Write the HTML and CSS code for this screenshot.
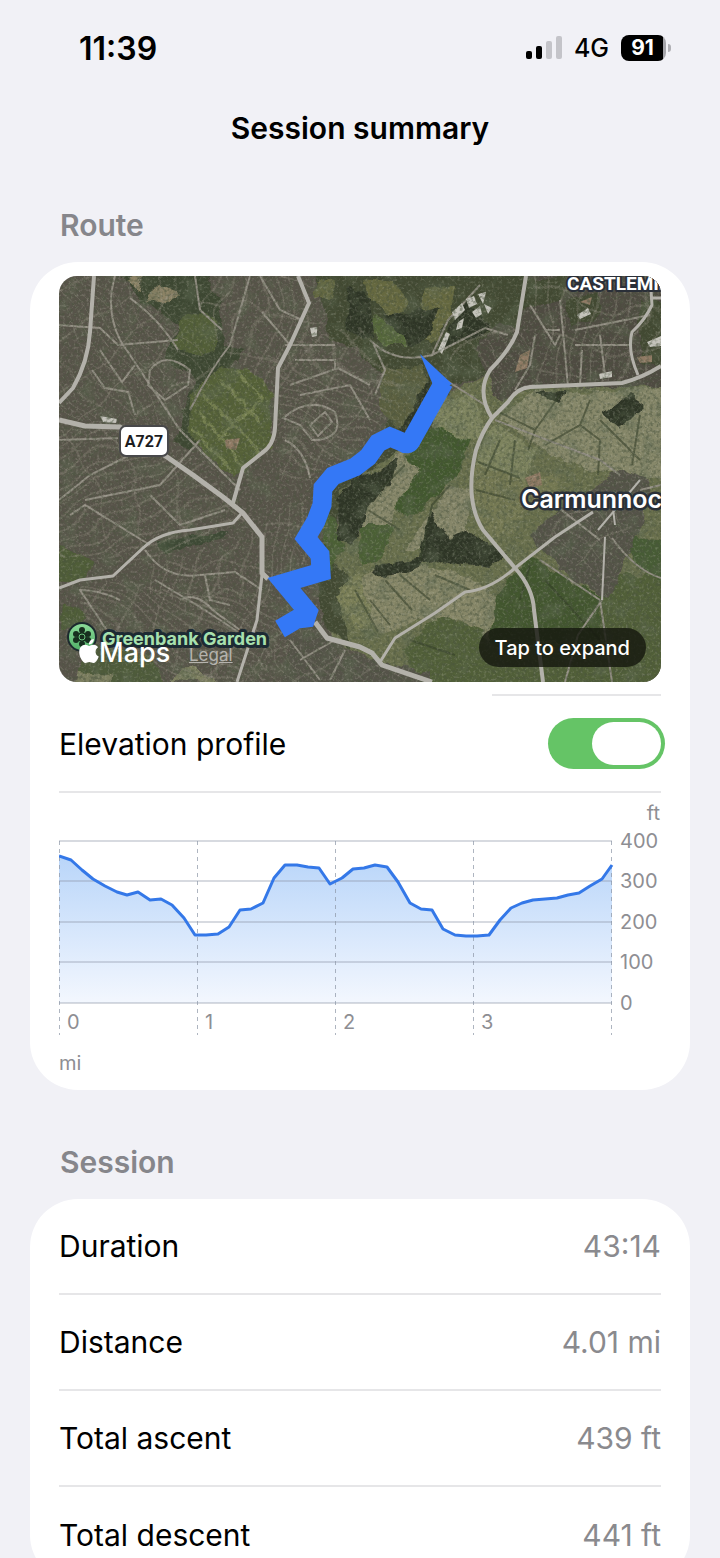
FILE: index.html
```html
<!doctype html>
<html lang="en">
<head>
<meta charset="utf-8">
<meta name="viewport" content="width=device-width, initial-scale=1">
<title>Session summary</title>
<link rel="stylesheet" href="styles.css">
</head>

<body>
<div class="screen">
	<div class="status">
		<span class="time">11:39</span>
		<div class="status-right">
			<svg class="signal" width="36" height="24" viewBox="0 0 36 24" aria-hidden="true">
				<rect x="0" y="15" width="6" height="8" rx="2"/>
				<rect x="10" y="10" width="6" height="13" rx="2"/>
				<rect class="off" x="20" y="5" width="6" height="18" rx="2"/>
				<rect class="off" x="30" y="0" width="6" height="23" rx="2"/>
			</svg>
			<span class="network">4G</span>
			<span class="battery"><span class="battery-body">91</span></span>
		</div>
	</div>

	<h1>Session summary</h1>

	<main>
		<h2>Route</h2>
		<section class="card route-card">
			<div class="map">
				<svg class="map-art" viewBox="59 276 602 406" role="img" aria-label="Satellite map of the route">
					<defs>
						<pattern id="st1" width="13" height="38" patternUnits="userSpaceOnUse" patternTransform="rotate(-38)">
							<path d="M0 0V38M0 2H13"/>
						</pattern>
						<pattern id="st2" width="36" height="11" patternUnits="userSpaceOnUse" patternTransform="rotate(28)">
							<path d="M0 1H36M2 0V11"/>
						</pattern>
						<pattern id="st3" width="15" height="42" patternUnits="userSpaceOnUse" patternTransform="rotate(12)">
							<path d="M1 0V42M0 1H15"/>
						</pattern>
						<pattern id="st4" width="40" height="12" patternUnits="userSpaceOnUse" patternTransform="rotate(-24)">
							<path d="M0 1H40M1 0V12"/>
						</pattern>
						<filter id="bend" x="-5%" y="-5%" width="110%" height="110%">
							<feTurbulence type="fractalNoise" baseFrequency=".014" numOctaves="2" seed="4" result="n"/>
							<feDisplacementMap in="SourceGraphic" in2="n" scale="46" xChannelSelector="R" yChannelSelector="G"/>
						</filter>
						<filter id="rough" x="-5%" y="-5%" width="110%" height="110%">
							<feTurbulence type="fractalNoise" baseFrequency=".06" numOctaves="3" seed="9" result="n"/>
							<feDisplacementMap in="SourceGraphic" in2="n" scale="12" xChannelSelector="R" yChannelSelector="G"/>
						</filter>
						<filter id="patches" x="0" y="0" width="100%" height="100%">
							<feTurbulence type="fractalNoise" baseFrequency=".05" numOctaves="4" seed="6"/>
							<feColorMatrix values="0 0 0 0 .12  0 0 0 0 .15  0 0 0 0 .09  4 0 0 0 -2"/>
						</filter>
						<filter id="dark" x="0" y="0" width="100%" height="100%">
							<feTurbulence type="fractalNoise" baseFrequency=".3" numOctaves="3" seed="2"/>
							<feColorMatrix values="0 0 0 0 .07  0 0 0 0 .09  0 0 0 0 .05  3.4 0 0 0 -1.5"/>
						</filter>
						<filter id="light" x="0" y="0" width="100%" height="100%">
							<feTurbulence type="fractalNoise" baseFrequency=".38" numOctaves="2" seed="17"/>
							<feColorMatrix values="0 0 0 0 .72  0 0 0 0 .7  0 0 0 0 .6  0 3 0 0 -1.55"/>
						</filter>
						<linearGradient id="pin" x1="0" y1="0" x2="0" y2="1">
							<stop offset="0" stop-color="#8ddc9a"/>
							<stop offset="1" stop-color="#4fae66"/>
						</linearGradient>
					</defs>

					<rect x="59" y="276" width="602" height="406" fill="#58544a"/>

					<!-- woods, parks and fields -->
					<g filter="url(#rough)">
						<path fill="#6a6f4e" d="M430 400L490 372 530 380H670V690H430L330 640 340 480 400 440Z"/>
						<path fill="#424a33" d="M312 262H530L520 330 490 372 452 385 430 430 400 450 340 490 330 560 350 575 340 600 350 650 320 620 320 560 330 490 380 440 400 400 358 348 330 340Z"/>
						<path fill="#3d4631" d="M115 268H205L220 300 225 345 245 350 215 385 190 450 175 440 195 380 165 355 178 325 140 300Z"/>
						<path fill="#525f39" d="M180 318Q200 305 218 325L215 350 200 358 172 345Z"/>
						<path fill="#8b8265" d="M126 282L142 276 140 290ZM146 300L160 286 180 294 172 304Z"/>
						<path fill="#566239" d="M220 366L250 370 272 390 270 445 235 480 205 455 189 430 190 400 205 380Z"/>
						<path fill="#66693f" d="M362 278L395 282 410 302 392 318 370 300ZM425 290L455 286 450 320 430 345 418 335ZM320 276L336 282 332 298 314 298Z"/>
						<path fill="#56683a" d="M365 322Q380 312 400 330L405 345 385 345Z"/>
						<path fill="#5c6140" d="M380 370L425 365 428 400 400 428 380 410Z"/>
						<path fill="#504c43" d="M485 372L475 350 500 320 518 330 525 270H665V388L530 386 500 402Z"/>
						<path fill="#424832" d="M515 280L570 276 560 300 520 310ZM566 300L600 292 600 315 570 325ZM640 300L665 300V370L640 360Z"/>
						<path fill="#87886a" d="M500 418L535 390 600 392 665 388V482L590 470 540 450Z"/>
						<path fill="#7e845f" d="M440 400L475 396 485 430 465 445 432 425ZM496 424L535 450 525 488 478 480 480 445Z"/>
						<path fill="#43582f" d="M415 450L430 425 470 440 456 475 410 520 385 500 395 470Z"/>
						<path fill="#87876a" d="M400 450L420 470 398 500 385 530 362 530 360 510ZM445 488L470 490 468 540 430 550 405 550Z"/>
						<path fill="#4b6034" d="M358 525L395 525 380 560 362 565ZM318 520L330 510 345 550 330 570Z"/>
						<path fill="#757953" d="M476 465L530 480 520 530 490 540 470 500ZM530 478L560 475 560 505 530 500Z"/>
						<path fill="#878767" d="M352 580L420 566 470 576 500 600 488 645 460 620 420 620 380 635Z"/>
						<path fill="#42562f" d="M496 596L530 558 600 595 604 640 530 645 488 652Z"/>
						<path fill="#515f38" d="M600 575L665 575V690H430L400 650 440 615 480 630 500 650 600 640Z"/>
						<path fill="#475b35" d="M620 535L665 540V585L640 570Z"/>
						<path fill="#7b8058" d="M338 588L358 575 375 625 358 628 335 598Z"/>
						<path fill="#505d39" d="M59 545L92 560 85 580 59 582ZM62 605L85 612 80 630 60 628Z"/>
						<path fill="#505c3a" d="M80 640L150 655 165 690H80Z"/>
						<path fill="#7d7f60" d="M168 680L190 665 218 682ZM80 672L110 675 110 690H75Z"/>
						<path fill="#3d4a34" d="M160 540L230 532 225 540 165 552Z"/>
						<path fill="#2e3427" d="M335 500Q350 478 375 472L398 460 392 482 368 512 352 545 340 540ZM430 510L450 540 470 530 505 555 490 568 440 560 400 575 372 578 378 565 420 558ZM602 415L630 395 645 405 620 430ZM535 392L565 390 560 405Z"/>
						<path fill="#2e3528" d="M383 315L415 310 440 305 430 335 408 345ZM465 300L490 325 480 340 450 345 440 352ZM350 285L372 300 375 340 345 330ZM400 430L430 375 425 420 405 440Z"/>
						<path fill="#55534a" d="M530 535L560 510 620 470 650 480 640 530 610 600 560 570ZM340 655L430 672 430 690H280L290 640 315 630Z"/>
					</g>

					<!-- golf fairways -->
					<g class="fairway" filter="url(#rough)">
						<path d="M205 395L262 455M198 410L245 468M222 378L262 425M215 440L262 400M195 430L230 470M235 370L262 400"/>
					</g>

					<!-- field hedges -->
					<path class="hedge" d="M495 410L535 430 560 395M535 430L528 450M545 445L580 425 600 440M580 425L590 400M600 440L598 475M600 420L640 460M632 465L640 415M500 440L485 475M515 440L510 485M478 462L520 478M476 490L515 500M380 490L405 465M368 510L400 530M370 600L390 625M385 580L412 610M400 575L430 600M355 590L378 632M435 575L470 590M530 565L520 600M545 580L600 640M410 640L455 655M420 560L432 505 450 485"/>

					<rect x="59" y="276" width="602" height="406" filter="url(#patches)" opacity=".45"/>

					<!-- side streets -->
					<g filter="url(#bend)" opacity=".75">
						<path fill="url(#st1)" d="M40 260H185L180 330 215 375 180 430 40 420Z"/>
						<path fill="url(#st3)" d="M205 260H320L315 330 280 380 235 360 215 330Z"/>
						<path fill="url(#st2)" d="M285 345L350 335 395 370 385 430 330 480 280 470Z"/>
						<path fill="url(#st4)" d="M40 425L125 430 195 465 245 515 140 560 40 555Z"/>
						<path fill="url(#st3)" d="M150 560L260 525 320 500 330 560 275 590 255 600 150 600Z"/>
						<path fill="url(#st2)" d="M70 590L255 590 280 640 270 700 80 640Z"/>
						<path fill="url(#st1)" d="M280 640L330 650 420 690H255Z"/>
						<path fill="url(#st3)" d="M535 260H675V375L530 390Z"/>
						<path fill="url(#st1)" d="M480 320L525 330 500 400 455 375Z"/>
						<path fill="url(#st1)" d="M545 540L590 500 630 490 630 540 610 590Z"/>
					</g>
					<path class="street" d="M115 276Q105 310 120 340L180 430 240 490M130 298Q160 320 178 350M59 325L100 328 118 345 178 340M100 350L122 382 135 365M92 370L105 388 128 392 135 415M59 440L118 438M150 370Q165 350 190 370L188 385 165 400 148 385ZM195 276L200 310 222 330M250 276L230 345Q210 370 190 410M260 276L280 310 302 320M262 312L290 345M285 345H335M295 360H335V370M290 385L338 368 370 385M300 395L350 385 370 420M283 418Q310 395 335 412 345 440 312 440L300 425ZM310 425L325 412 332 422 318 436ZM285 440Q305 450 310 478M59 500L90 475 140 450M70 515L85 505 150 545M85 500L160 485 200 440M150 495L180 525 225 510M120 600Q100 590 80 590L120 650M145 550Q165 580 200 575L235 572 262 590M180 600Q195 590 215 612L240 630M205 575L210 600 230 605M155 580L205 610 250 640M290 640L320 680M300 660L335 640M330 680L345 650"/>
					<path class="street" d="M370 340Q395 365 432 355L485 328 508 335M432 355L448 320 480 285M374 345L385 370 375 395M430 370L485 405M535 335L530 365 515 390M560 300L568 386M530 305L555 345 560 335M575 330L650 315M575 345H632M600 335L605 375M580 385L582 350M545 330H560M495 420L600 460 620 475M555 505L600 540M540 560L600 600M612 538Q635 570 661 578M602 600L578 635 565 682M600 600L612 682M640 490L661 485"/>

					<!-- warehouses and bare roofs -->
					<path fill="#c4c3bb" d="M452 312L462 303 465 310 455 320ZM466 299L474 296 477 304 469 308ZM472 312L480 306 482 314 476 318ZM458 322L464 318 462 328 456 330ZM484 304L492 308 488 314ZM438 350L446 332 450 334 442 354ZM478 294L486 292 483 304ZM577 315L588 308 591 314 580 319ZM599 374L612 371 612 377 600 379ZM647 342L661 336V346L650 347ZM310 328L317 327 317 336 312 337ZM100 416L117 419 116 423 103 422Z"/>
					<path fill="#8f7a64" d="M525 478L540 472 542 485 530 488ZM637 357L652 355 652 362 640 363ZM225 440L240 438 236 450 226 448ZM580 302L592 297 590 305ZM520 355L530 350 527 368 515 372Z"/>

					<rect x="59" y="276" width="602" height="406" filter="url(#dark)" opacity=".5"/>
					<rect x="59" y="276" width="602" height="406" filter="url(#light)" opacity=".22"/>

					<!-- main roads -->
					<g class="road">
						<path d="M94 276L90 332Q88 362 73 388L59 403"/>
						<path class="wide" d="M59 420L85 426 120 427 167 457 193 475 223 497 243 513 262 537V573L268 579"/>
						<path d="M298 276L309 303 290 345 278 368 275 428Q274 445 262 453L243 468 233 503"/>
						<path class="thin" d="M59 588L80 580 113 576 143 548Q160 532 190 530L233 523 241 514"/>
						<path class="thin" d="M262 575L257 620 237 682"/>
						<path d="M526 276L517 332Q510 350 490 370 476 392 492 418 482 432 476 450 464 500 483 530L515 568Q533 588 534 610L543 682"/>
						<path d="M492 418L508 402Q517 388 530 387L622 383Q642 378 661 366"/>
						<path class="thin" d="M593 512L555 537 515 568Q490 590 465 592L435 613 395 638 380 662"/>
						<path class="wide" d="M315 622L327 638 360 647 372 653 382 665 432 682"/>
						<path class="thin" d="M650 276L652 305Q645 320 632 332 627 350 638 375M650 298H661"/>
						<path class="faint" d="M605 537L602 600M598 530L640 480M615 525L612 500"/>
					</g>

					<!-- recorded track -->
					<path fill="#3478f6" d="M420 354L452 384 436 392Z"/>
					<path class="track" d="M444 382L411 441Q408 446 402 442L390 437 378 443 368 457 355 467 333 476 323 488 322 505 316 521 306 538 320 555 321 572 284 583 308 612 306 618 297 619 280 629"/>

					<!-- labels -->
					<rect x="120" y="426" width="48" height="30" rx="6" fill="#fff" stroke="#48484a" stroke-width="2"/>
					<text class="shield" x="144" y="447" text-anchor="middle">A727</text>
					<text class="district" x="567" y="290">CASTLEMILK</text>
					<text class="place" x="521" y="508">Carmunnock</text>
					<text class="poi" x="102" y="645">Greenbank Garden</text>
					<circle cx="82" cy="637" r="14" fill="url(#pin)" stroke="#1c2a2e" stroke-width="2"/>
					<g fill="#17301f">
						<circle cx="82" cy="630" r="3"/><circle cx="88" cy="634" r="3"/><circle cx="88" cy="640" r="3"/>
						<circle cx="82" cy="644" r="3"/><circle cx="76" cy="640" r="3"/><circle cx="76" cy="634" r="3"/>
						<circle cx="82" cy="637" r="5"/>
					</g>
					<circle cx="82" cy="637" r="3" fill="none" stroke="#6cc67e"/>
					<path fill="#fff" transform="translate(77 639)" d="M12.152 6.896c-.948 0-2.415-1.078-3.96-1.04-2.04.027-3.91 1.183-4.961 3.014-2.117 3.675-.546 9.103 1.519 12.09 1.013 1.454 2.208 3.09 3.792 3.039 1.52-.065 2.09-.987 3.935-.987 1.831 0 2.35.987 3.96.948 1.637-.026 2.676-1.48 3.676-2.948 1.156-1.688 1.636-3.325 1.662-3.415-.039-.013-3.182-1.221-3.22-4.857-.026-3.04 2.48-4.494 2.597-4.559-1.429-2.09-3.623-2.324-4.39-2.376-2-.156-3.675 1.09-4.61 1.09zM15.53 3.83c.843-1.012 1.4-2.427 1.245-3.83-1.207.052-2.662.805-3.532 1.818-.78.896-1.454 2.338-1.273 3.714 1.338.104 2.715-.688 3.559-1.701"/>
					<text class="brand" x="99" y="662">Maps</text>
				</svg>
				<a class="legal" href="#">Legal</a>
				<button class="expand" type="button">Tap to expand</button>
			</div>

			<div class="short-line"></div>
			<div class="toggle-row">
				<label for="elevation">Elevation profile</label>
				<input class="switch" id="elevation" type="checkbox" role="switch" checked>
			</div>

			<svg class="chart" viewBox="0 0 602 297" role="img" aria-label="Elevation in feet by distance in miles">
				<defs>
					<linearGradient id="fill" x1="0" y1="48" x2="0" y2="210" gradientUnits="userSpaceOnUse">
						<stop offset="0" stop-color="#b3d2f9"/>
						<stop offset="1" stop-color="#f3f7fe"/>
					</linearGradient>
				</defs>
				<path fill="url(#fill)" d="M0 63L12 67 23 77 34 86 46 93 58 99 68 102 79 99 91 107 102 106 113 112 125 125 136 142 147 142 159 141 170 134 181 117 192 116 204 110 215 85 226 72 238 72 249 74 260 75 271 91 283 85 294 76 305 75 316 72 328 74 339 89 351 110 362 116 373 117 384 136 396 142 407 143 418 143 430 142 441 127 452 115 463 110 474 107 486 106 498 105 509 102 520 100 531 93 543 86 553 72V210H0Z"/>
				<path class="grid" d="M0 48H553M0 88H553M0 129H553M0 169H553M0 210H553"/>
				<path class="grid dashed" d="M.5 48V242M138.5 48V242M276.5 48V242M414.5 48V242M552.5 48V242"/>
				<path class="profile" d="M0 63L12 67 23 77 34 86 46 93 58 99 68 102 79 99 91 107 102 106 113 112 125 125 136 142 147 142 159 141 170 134 181 117 192 116 204 110 215 85 226 72 238 72 249 74 260 75 271 91 283 85 294 76 305 75 316 72 328 74 339 89 351 110 362 116 373 117 384 136 396 142 407 143 418 143 430 142 441 127 452 115 463 110 474 107 486 106 498 105 509 102 520 100 531 93 543 86 553 72"/>
				<g class="ticks">
					<text x="601" y="27" text-anchor="end">ft</text>
					<text x="561" y="55">400</text>
					<text x="561" y="95">300</text>
					<text x="561" y="136">200</text>
					<text x="561" y="176">100</text>
					<text x="561" y="217">0</text>
					<text x="8" y="236">0</text>
					<text x="146" y="236">1</text>
					<text x="284" y="236">2</text>
					<text x="422" y="236">3</text>
					<text x="0" y="277">mi</text>
				</g>
			</svg>
		</section>

		<h2>Session</h2>
		<section class="card">
			<dl>
				<div><dt>Duration</dt><dd>43:14</dd></div>
				<div><dt>Distance</dt><dd>4.01 mi</dd></div>
				<div><dt>Total ascent</dt><dd>439 ft</dd></div>
				<div><dt>Total descent</dt><dd>441 ft</dd></div>
			</dl>
		</section>
	</main>
</div>
</body>
</html>
```

FILE: styles.css
```css
*{margin:0; padding:0; box-sizing:border-box;}
body{background:#f1f1f6; color:#000; font-family:Inter, "Liberation Sans", sans-serif;}
.screen{height:100vh; overflow:hidden;}

.status{display:flex; justify-content:space-between; align-items:center; height:96px; padding:0 49px 0 79px;}
.time{font-size:32px; font-weight:600;}
.status-right{display:flex; align-items:center; gap:12px;}
.signal .off{fill:#c4c4c9;}
.network{font-size:25px; font-weight:500; line-height:26px;}
.battery{display:flex; align-items:center; gap:2px;}
.battery:after{content:""; width:3px; height:8px; border-radius:0 4px 4px 0; background:#b0b0b5;}
.battery-body{width:45px; height:26px; padding-right:2px; border-radius:8px; background:linear-gradient(90deg, #000 42px, #a5a5aa 42px); color:#fff; font-size:21px; font-weight:700; line-height:26px; text-align:center;}

h1{height:64px; font-size:30px; font-weight:600; line-height:64px; text-align:center;}
main{padding:0 30px;}
h2{padding:46px 30px 11px; color:#86868b; font-size:30px; font-weight:600; line-height:52px;}
h2:first-child{padding-top:39px;}
.card{padding:0 29px; border-radius:48px; background:#fff;}
.route-card{padding-top:14px;}

.map{position:relative; border-radius:18px; overflow:hidden;}
.map-art{display:block; width:100%;}
.map-art pattern path{fill:none; stroke:#8c877a; stroke-width:1;}
.fairway{fill:none; stroke:#747f50; stroke-width:3;}
.hedge{fill:none; stroke:#333d28; stroke-width:2; opacity:.6;}
.street{fill:none; stroke:#918d82; stroke-width:2;}
.road{fill:none; stroke:#b3b1aa; stroke-width:4; stroke-linejoin:round;}
.road .wide{stroke-width:5;}
.road .thin{stroke-width:3;}
.road .faint{stroke-width:2;}
.track{fill:none; stroke:#3478f6; stroke-width:19;}
.shield{font:700 16px "Liberation Sans Narrow", Roboto, sans-serif; fill:#1c1c1e;}
.district, .place, .poi{paint-order:stroke; stroke-linejoin:round;}
.district{font:700 19px "Liberation Sans Narrow", Roboto, sans-serif; fill:#fff; stroke:#2a2f38; stroke-width:4;}
.place{font-size:25px; font-weight:600; fill:#fff; stroke:#2a3038; stroke-width:5;}
.poi{font-size:18px; font-weight:700; fill:#a8e0ae; stroke:#1d2a33; stroke-width:6;}
.brand{font-size:27px; font-weight:500; fill:#fff;}
.legal{position:absolute; left:130px; bottom:17px; color:#b5b3ad; font-size:17px; line-height:20px;}
.expand{position:absolute; right:15px; bottom:15px; height:39px; padding:0 16px; border:0; border-radius:20px; background:rgba(20,22,14,.8); color:#fff; font-family:inherit; font-size:20px; font-weight:500;}

.short-line{width:28%; height:2px; margin:12px 0 0 auto; background:#e6e6e8;}
.toggle-row{display:flex; justify-content:space-between; align-items:center; height:97px; border-bottom:2px solid #e6e6e8; font-size:30px;}
.switch{appearance:none; width:117px; height:51px; margin-right:-4px; padding:4px; border-radius:26px; background:#65c466;}
.switch:before{content:""; display:block; width:69px; height:43px; border-radius:22px; background:#fff;}
.switch:checked:before{margin-left:auto;}

.chart{display:block; width:100%;}
.grid{fill:none; stroke:#8c96a5; stroke-opacity:.35; stroke-width:2;}
.dashed{stroke-width:1; stroke-opacity:.7; stroke-dasharray:4 4;}
.profile{fill:none; stroke:#3478e8; stroke-width:3; stroke-linejoin:round;}
.ticks{font-size:20px; fill:#8e8e93;}

dl div{display:flex; justify-content:space-between; align-items:center; height:96px; border-bottom:2px solid #e6e6e8; font-size:30px;}
dl div:last-child{border-bottom:0;}
dd{color:#8a8a8e;}
```
